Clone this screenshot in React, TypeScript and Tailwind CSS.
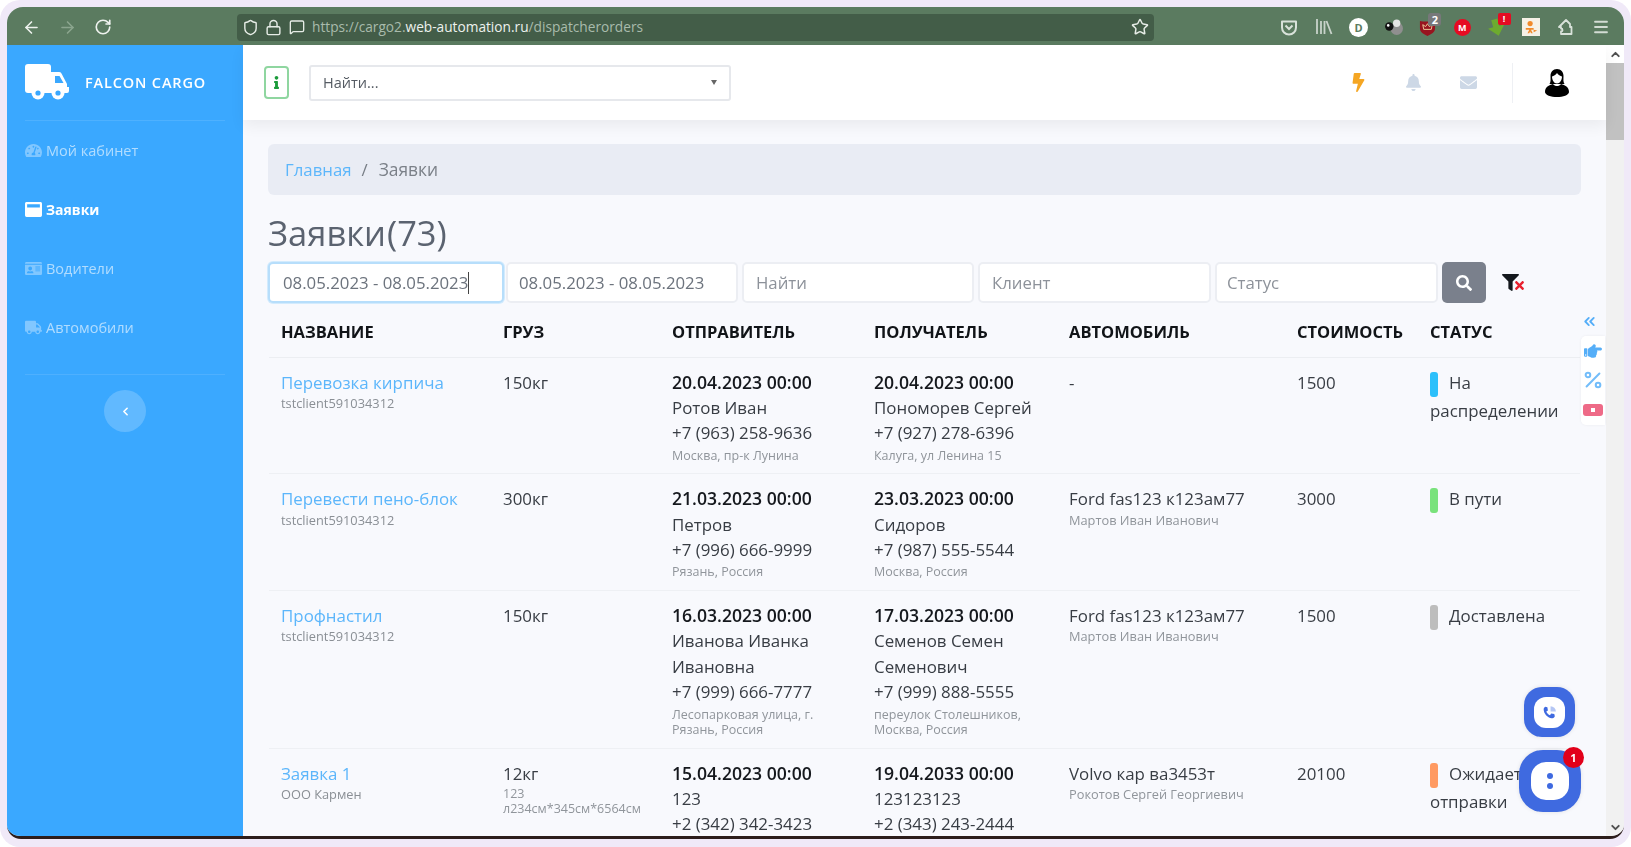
import React from "react";
import { ArrowLeft, ArrowRight, RotateCw, Shield, Lock, MessageSquare, Star, Menu, ChevronUp, ChevronDown, ChevronLeft, ChevronsLeft, Percent } from "lucide-react";
import { FaTachometerAlt, FaIdCard, FaTruck, FaBolt, FaBell, FaEnvelope, FaSearch, FaFilter, FaInfo, FaHandPointRight, FaTimes, FaWindowMaximize } from "react-icons/fa";

type Person = { date: string; name: string; phone: string; addr: string };
type Row = {
  title: string; client: string; cargo: string; cargoNote?: string;
  from: Person; to: Person; car: string; driver?: string; price: string;
  status: string; bar: string;
};

const rows: Row[] = [
  {
    title: "Перевозка кирпича", client: "tstclient591034312", cargo: "150кг",
    from: { date: "20.04.2023 00:00", name: "Ротов Иван", phone: "+7 (963) 258-9636", addr: "Москва, пр-к Лунина" },
    to: { date: "20.04.2023 00:00", name: "Пономорев Сергей", phone: "+7 (927) 278-6396", addr: "Калуга, ул Ленина 15" },
    car: "-", price: "1500", status: "На распределении", bar: "bg-[#2cc0fb]",
  },
  {
    title: "Перевести пено-блок", client: "tstclient591034312", cargo: "300кг",
    from: { date: "21.03.2023 00:00", name: "Петров", phone: "+7 (996) 666-9999", addr: "Рязань, Россия" },
    to: { date: "23.03.2023 00:00", name: "Сидоров", phone: "+7 (987) 555-5544", addr: "Москва, Россия" },
    car: "Ford fas123 к123ам77", driver: "Мартов Иван Иванович", price: "3000", status: "В пути", bar: "bg-[#79e27c]",
  },
  {
    title: "Профнастил", client: "tstclient591034312", cargo: "150кг",
    from: { date: "16.03.2023 00:00", name: "Иванова Иванка Ивановна", phone: "+7 (999) 666-7777", addr: "Лесопарковая улица, г. Рязань, Россия" },
    to: { date: "17.03.2023 00:00", name: "Семенов Семен Семенович", phone: "+7 (999) 888-5555", addr: "переулок Столешников, Москва, Россия" },
    car: "Ford fas123 к123ам77", driver: "Мартов Иван Иванович", price: "1500", status: "Доставлена", bar: "bg-[#bdbdbd]",
  },
  {
    title: "Заявка 1", client: "ООО Кармен", cargo: "12кг", cargoNote: "123 л234см*345см*6564см",
    from: { date: "15.04.2023 00:00", name: "123", phone: "+2 (342) 342-3423", addr: "" },
    to: { date: "19.04.2033 00:00", name: "123123123", phone: "+2 (343) 243-2444", addr: "" },
    car: "Volvo кар ва3453т", driver: "Рокотов Сергей Георгиевич", price: "20100", status: "Ожидает отправки", bar: "bg-[#ff9a62]",
  },
];

function Truck() {
  return (
    <svg viewBox="0 0 44 36" className="w-[44px] h-[36px]" fill="#fff">
      <path d="M3 0h20a3 3 0 0 1 3 3v26H3a3 3 0 0 1-3-3V3a3 3 0 0 1 3-3z" />
      <path d="M26 8h8a3 3 0 0 1 2.5 1.4L42 20v3h2v4a2 2 0 0 1-2 2H26z" />
      <path d="M30 12h4.5l4 7H30z" fill="#3aa8ff" />
      <circle cx="13" cy="29" r="6.5" />
      <circle cx="13" cy="29" r="2.6" fill="#3aa8ff" />
      <circle cx="33" cy="29" r="6.5" />
      <circle cx="33" cy="29" r="2.6" fill="#3aa8ff" />
    </svg>
  );
}

function Avatar() {
  return (
    <svg viewBox="0 0 24 28" className="w-[24px] h-[28px]">
      <path d="M12 0c-4 0-6.5 3-6.5 7 0 3 .5 6-1 8h15c-1.500-2-1-5-1-8 0-4-2.500-7-6.500-7z" fill="#000" />
      <path d="M12 4c-1 2-3.500 3-5 3.500 0 3.500 2 7 5 7s5-3.500 5-7c-1.500-.5-4-1.500-5-3.500z" fill="#fff" />
      <path d="M8 15c-4 1-8 3-8 8 0 3 6 5 12 5s12-2 12-5c0-5-4-7-8-8-1 1.500-2.500 2-4 2s-3-.5-4-2z" fill="#000" />
    </svg>
  );
}

function Ext({ children }: { children: React.ReactNode }) {
  return <div className="relative w-[34.6px] flex items-center justify-center shrink-0">{children}</div>;
}

function Extensions() {
  return (
    <div className="flex items-center ml-[118px]">
      <Ext>
        <svg viewBox="0 0 18 18" className="w-[18px] h-[18px]" fill="none" stroke="#d9e2da" strokeWidth="2">
          <path d="M2 3.500h14v6a7 7 0 0 1-14 0z" strokeLinejoin="round" />
          <path d="M5.500 7.500L9 11l3.500-3.500" />
        </svg>
      </Ext>
      <Ext>
        <svg viewBox="0 0 18 18" className="w-[18px] h-[18px]" fill="none" stroke="#c8d3ca" strokeWidth="1.800">
          <path d="M2 1v15M6 3v13M9.500 3v13M11.500 3l5 13" />
        </svg>
      </Ext>
      <Ext>
        <div className="w-[19px] h-[19px] rounded-full bg-white flex items-center justify-center text-[#5b7b60] text-[11px] font-bold leading-none">D</div>
      </Ext>
      <Ext>
        <svg viewBox="0 0 18 18" className="w-[19px] h-[19px]">
          <circle cx="12" cy="10" r="6" fill="#8f8f8f" />
          <circle cx="12" cy="5" r="3.500" fill="#e4e4e4" />
          <circle cx="5" cy="8" r="4" fill="#111" />
          <circle cx="4" cy="7" r="1.200" fill="#fff" />
        </svg>
      </Ext>
      <Ext>
        <svg viewBox="0 0 18 18" className="w-[17px] h-[19px]">
          <path d="M1 2c3 1 13 1 16 0v8c0 4-4 6-8 8-4-2-8-4-8-8z" fill="#98141f" />
          <path d="M5 11L4 6l3 2 2-3 2 3 3-2-1 5z" fill="none" stroke="#eecf9a" strokeWidth="1" />
        </svg>
        <span className="absolute left-[18px] top-[-5px] w-[13px] h-[13px] rounded-[3px] bg-[#77787a] text-white text-[11px] font-bold leading-[13px] text-center">2</span>
      </Ext>
      <Ext>
        <div className="w-[17px] h-[17px] rounded-full bg-[#e60b22] flex items-center justify-center text-white text-[9px] font-bold leading-none">M</div>
      </Ext>
      <Ext>
        <svg viewBox="0 0 18 18" className="w-[19px] h-[19px]">
          <path d="M6 1h6v7h5l-8 9-8-9h5z" fill="#6dab2f" transform="rotate(-15 9 9)" />
        </svg>
        <span className="absolute left-[18px] top-[-5px] w-[13px] h-[12px] rounded-[2px] bg-[#e60b22] text-white text-[9px] font-bold leading-[12px] text-center">!</span>
      </Ext>
      <Ext>
        <div className="w-[18px] h-[18px] bg-[#f6f1e6] flex items-center justify-center">
          <svg viewBox="0 0 16 16" className="w-[14px] h-[14px]" fill="#f18a2a">
            <circle cx="7" cy="4" r="3" />
            <path d="M2 9h9v2H8l2 4H8l-1-2-1 2H4l2-4H2zM11 11l4 1-4 2z" />
          </svg>
        </div>
      </Ext>
      <Ext>
        <svg viewBox="0 0 18 18" className="w-[18px] h-[18px]" fill="none" stroke="#d9e2da" strokeWidth="1.800" strokeLinejoin="round">
          <path d="M2 9l7-7 4 4v3h1.500v7H4v-2.500c2 0 2-3 0-3V9z" />
        </svg>
      </Ext>
      <Ext>
        <Menu size={18} color="#d3dcd4" strokeWidth={2.4} />
      </Ext>
    </div>
  );
}

function Contact({ p }: { p: Person }) {
  return (
    <>
      <div className="font-semibold text-[17.6px] text-[#15181d]">{p.date}</div>
      <div>{p.name}</div>
      <div>{p.phone}</div>
      {p.addr && <div className="text-[12.5px] leading-[15.5px] text-[#90959b] pt-[2px]">{p.addr}</div>}
    </>
  );
}

const th = "text-left align-middle px-3 text-[16.5px] font-bold text-[#111418] pt-[3px]";
const td = "align-top px-3 pt-3 pb-[10px]";

function SideItem({ icon, label, active }: { icon: React.ReactNode; label: string; active?: boolean }) {
  return (
    <div className={`h-[59px] pl-[16px] flex items-center ${active ? "text-white font-bold text-[14px]" : "text-white/60 text-[14.5px]"}`}>
      <span className={`w-[21px] flex justify-center shrink-0 text-[17px] ${active ? "" : "opacity-60"}`}>{icon}</span>
      <span className="ml-[2px]">{label}</span>
    </div>
  );
}

export default function App() {
  return (
    <div className="w-full h-screen bg-white overflow-hidden font-['Open_Sans','Noto_Sans',sans-serif] text-[16.9px] leading-[25.4px] text-[#383d44]">
      <div className="h-full bg-[#f0e9f8] rounded-[20px] p-[7px] pb-[8px]">
        <div className="h-full rounded-t-[16px] rounded-b-[14px] overflow-hidden flex flex-col bg-[#f8f9fd] blur-[0.6px] border-b-[3px] border-[#2c1d1b]">
          {/* browser toolbar */}
          <div className="h-[38px] shrink-0 bg-[#5b7b60] flex items-center pl-[6px] pt-[2px]">
            <div className="w-[36px] flex justify-center"><ArrowLeft size={19} color="#eef2ee" strokeWidth={2} /></div>
            <div className="w-[36px] flex justify-center"><ArrowRight size={19} color="#8ba58e" strokeWidth={2} /></div>
            <div className="w-[36px] flex justify-center"><RotateCw size={18} color="#eef2ee" strokeWidth={2.2} /></div>
            <div className="ml-[116px] w-[917px] h-[27px] rounded-[4px] bg-[#435d48] flex items-center pl-[5px] pr-[4px]">
              <Shield size={17} color="#e6ece6" strokeWidth={2} />
              <Lock size={17} color="#e6ece6" strokeWidth={2} className="ml-[6px]" />
              <MessageSquare size={16} color="#e6ece6" strokeWidth={2} className="ml-[7px]" />
              <span className="ml-[7px] text-[13.7px] text-[#a9bbac] whitespace-nowrap">https://cargo2.<span className="text-[#eef2ee]">web-automation.ru</span>/dispatcherorders</span>
              <Star size={18} color="#e6ece6" strokeWidth={2} className="ml-auto mr-[1px]" />
            </div>
            <Extensions />
          </div>

          <div className="flex-1 flex min-h-0">
            {/* sidebar */}
            <aside className="w-[236px] shrink-0 bg-[#3aa8ff] flex flex-col">
              <div className="h-[76px] mx-[18px] border-b border-white/10 flex items-start pt-[19px] shrink-0">
                <Truck />
                <span className="ml-[16px] mt-[10px] text-[14.5px] font-semibold tracking-[0.85px] text-white leading-[18px] whitespace-nowrap">FALCON CARGO</span>
              </div>
              <SideItem icon={<FaTachometerAlt />} label="Мой кабинет" />
              <SideItem icon={<FaWindowMaximize />} label="Заявки" active />
              <SideItem icon={<FaIdCard />} label="Водители" />
              <SideItem icon={<FaTruck />} label="Автомобили" />
              <div className="mx-[18px] mt-[17px] border-b border-white/10" />
              <div className="mt-[15px] mx-auto w-[42px] h-[42px] rounded-full bg-white/20 flex items-center justify-center">
                <ChevronLeft size={13} color="#fff" strokeWidth={3} />
              </div>
            </aside>

            {/* main */}
            <main className="flex-1 min-w-0 flex flex-col relative">
              <header className="h-[75px] shrink-0 bg-white flex items-center pl-[21px] relative z-10 shadow-[0_6px_14px_rgba(0,0,0,0.06)]">
                <div className="w-[25px] h-[33px] border-2 border-[#8fd6a0] rounded-[4px] flex items-center justify-center">
                  <FaInfo size={13} color="#1a9b3a" />
                </div>
                <div className="ml-[20px] w-[422px] h-[36px] border-2 border-[#e6e8ec] rounded-[3px] flex items-center pl-[12px] pr-[12px] text-[14.5px] text-[#555b63]">
                  Найти...
                  <span className="ml-auto w-0 h-0 border-l-[3.500px] border-r-[3.500px] border-t-[5px] border-l-transparent border-r-transparent border-t-[#666]" />
                </div>
                <div className="ml-auto flex items-center">
                  <div className="w-[55px] flex justify-center"><FaBolt size={19} color="#f5a623" /></div>
                  <div className="w-[55px] flex justify-center"><FaBell size={17} color="#cdd8e6" /></div>
                  <div className="w-[55px] flex justify-center"><FaEnvelope size={17} color="#cdd8e6" /></div>
                  <div className="w-px h-[40px] bg-[#eef0f4] ml-[16px]" />
                  <div className="ml-[32px] mr-[37px]"><Avatar /></div>
                </div>
              </header>

              <div className="flex-1 min-h-0 overflow-hidden px-[25px] pt-[24px]">
                <nav className="h-[51px] rounded-[6px] bg-[#e9ecf4] flex items-center pl-[17px] text-[16.8px]">
                  <span className="text-[#5cb6fb]">Главная</span>
                  <span className="ml-[10px] mr-[11px] text-[#777d85]">/</span>
                  <span className="text-[#7b8088] text-[17.4px]">Заявки</span>
                </nav>

                <h1 className="mt-[18px] text-[34.5px] leading-[40px] text-[#5b6370] font-normal">Заявки<span className="ml-[1px]">(73)</span></h1>

                <div className="mt-[9px] flex gap-[4px] h-[41px] text-[16.8px]">
                  <div className="w-[236px] border-2 border-[#b7defb] rounded-[5px] bg-white flex items-center pl-[13px] text-[#6c737d] shadow-[0_0_0_1px_#d3ebfd]">08.05.2023 - 08.05.2023<span className="w-px h-[22px] bg-[#444]" /></div>
                  <div className="w-[232px] -ml-[2px] border-2 border-[#eceef3] rounded-[5px] bg-white flex items-center pl-[11px] text-[#6c737d]">08.05.2023 - 08.05.2023</div>
                  <div className="w-[232px] border-2 border-[#eceef3] rounded-[5px] bg-white flex items-center pl-[12px] text-[#8d929a]">Найти</div>
                  <div className="w-[233px] border-2 border-[#eceef3] rounded-[5px] bg-white flex items-center pl-[12px] text-[#8d929a]">Клиент</div>
                  <div className="w-[223px] border-2 border-[#eceef3] rounded-[5px] bg-white flex items-center pl-[10px] text-[#8d929a]">Статус</div>
                  <div className="w-[44px] rounded-[5px] bg-[#7a808c] flex items-center justify-center"><FaSearch size={16} color="#fff" /></div>
                  <div className="relative w-[26px] ml-[12px] flex items-center">
                    <FaFilter size={17} color="#14181d" />
                    <FaTimes size={13} color="#e8202e" className="absolute left-[11px] top-[17px]" />
                  </div>
                </div>

                <table className="mt-[1px] ml-px w-[1311px] table-fixed border-collapse">
                  <colgroup>
                    <col className="w-[222px]" />
                    <col className="w-[169px]" />
                    <col className="w-[202px]" />
                    <col className="w-[195px]" />
                    <col className="w-[228px]" />
                    <col className="w-[133px]" />
                    <col className="w-[162px]" />
                  </colgroup>
                  <thead>
                    <tr className="h-[53px] border-b border-[#eceef2]">
                      <th className={th}>НАЗВАНИЕ</th>
                      <th className={th}>ГРУЗ</th>
                      <th className={th}>ОТПРАВИТЕЛЬ</th>
                      <th className={th}>ПОЛУЧАТЕЛЬ</th>
                      <th className={th}>АВТОМОБИЛЬ</th>
                      <th className={th}>СТОИМОСТЬ</th>
                      <th className={th}>СТАТУС</th>
                    </tr>
                  </thead>
                  <tbody>
                    {rows.map((r) => (
                      <tr key={r.title} className="border-b border-[#eef0f4]">
                        <td className={td}>
                          <div className="text-[#5cb6fb]">{r.title}</div>
                          <div className="text-[12.8px] leading-[16px] text-[#8a8f95]">{r.client}</div>
                        </td>
                        <td className={td}>
                          <div>{r.cargo}</div>
                          {r.cargoNote && <div className="text-[12.5px] leading-[15px] text-[#90959b] w-[145px]">{r.cargoNote}</div>}
                        </td>
                        <td className={td}><Contact p={r.from} /></td>
                        <td className={td}><Contact p={r.to} /></td>
                        <td className={td}>
                          <div>{r.car}</div>
                          {r.driver && <div className="text-[12.8px] leading-[16px] text-[#90959b]">{r.driver}</div>}
                        </td>
                        <td className={td}>{r.price}</td>
                        <td className={td}>
                          <div className="leading-[28px] -mt-px">
                            <span className={`inline-block w-2 h-[25px] rounded-[3px] align-top mt-[3px] mr-[11px] ${r.bar}`} />
                            {r.status}
                          </div>
                        </td>
                      </tr>
                    ))}
                  </tbody>
                </table>
              </div>

              {/* side tabs */}
              <div className="absolute left-[1338px] top-[265px] w-[24px] flex flex-col items-center">
                <ChevronsLeft size={17} color="#55aef8" strokeWidth={2.600} className="absolute top-[3px] left-0" />
                <div className="mt-[26px] w-[24px] bg-white rounded-l-[5px] flex flex-col items-center shadow-[0_0_3px_rgba(0,0,0,0.06)]">
                  <div className="h-[29px] flex items-center justify-center"><FaHandPointRight size={18} color="#55aef8" /></div>
                  <div className="h-[30px] flex items-center justify-center"><Percent size={22} color="#73bdfa" strokeWidth={2.200} /></div>
                  <div className="h-[30px] flex items-center justify-center">
                    <div className="w-[20px] h-[12px] rounded-[3px] bg-[#ee6a87] flex items-center justify-center">
                      <span className="w-[4px] h-[4px] bg-white" />
                    </div>
                  </div>
                </div>
              </div>

              {/* floating buttons */}
              <div className="absolute left-[1281px] top-[642px] w-[51px] h-[50px] rounded-[18px] bg-[#3f6ae0] flex items-center justify-center shadow-[0_0_4px_rgba(0,0,0,0.1)]">
                <div className="w-[31px] h-[31px] rounded-[12px] bg-white flex items-center justify-center">
                  <svg viewBox="0 0 16 16" className="w-[17px] h-[17px]">
                    <path d="M4 2.500l2 .5.5 3-1.500 1c.5 1.500 2 3 3.500 3.500l1-1.500 3 .5.5 2c-.5 1.500-2 2-3 2C6 13 2.500 9 2.500 5c0-1 .5-2 1.500-2.500z" fill="#3f6ae0" />
                    <path d="M9 2a5 5 0 0 1 5 5H9z" fill="#b4c6f4" />
                  </svg>
                </div>
              </div>
              <div className="absolute left-[1276px] top-[705px] w-[62px] h-[62px] rounded-[24px] bg-[#3f6ae0] flex items-center justify-center shadow-[0_0_4px_rgba(0,0,0,0.1)]">
                <div className="w-[38px] h-[38px] rounded-[15px] bg-white flex flex-col items-center justify-center gap-[4px]">
                  <span className="w-[6px] h-[6px] rounded-full bg-[#3f6ae0]" />
                  <span className="w-[6px] h-[6px] rounded-full bg-[#3f6ae0]" />
                </div>
                <span className="absolute left-[44px] top-[-3px] w-[21px] h-[21px] rounded-full bg-[#e2001a] text-white text-[11px] font-bold leading-[21px] text-center">1</span>
              </div>
            </main>

            {/* page scrollbar */}
            <div className="w-[18px] shrink-0 bg-[#f1f1f1] flex flex-col items-center">
              <div className="h-[18px] w-full bg-white flex items-center justify-center"><ChevronUp size={13} color="#505050" strokeWidth={3.500} /></div>
              <div className="h-[77px] w-full bg-[#c1c1c1]" />
              <div className="mt-auto h-[18px] flex items-center justify-center"><ChevronDown size={13} color="#505050" strokeWidth={3.500} /></div>
            </div>
          </div>
        </div>
      </div>
    </div>
  );
}
